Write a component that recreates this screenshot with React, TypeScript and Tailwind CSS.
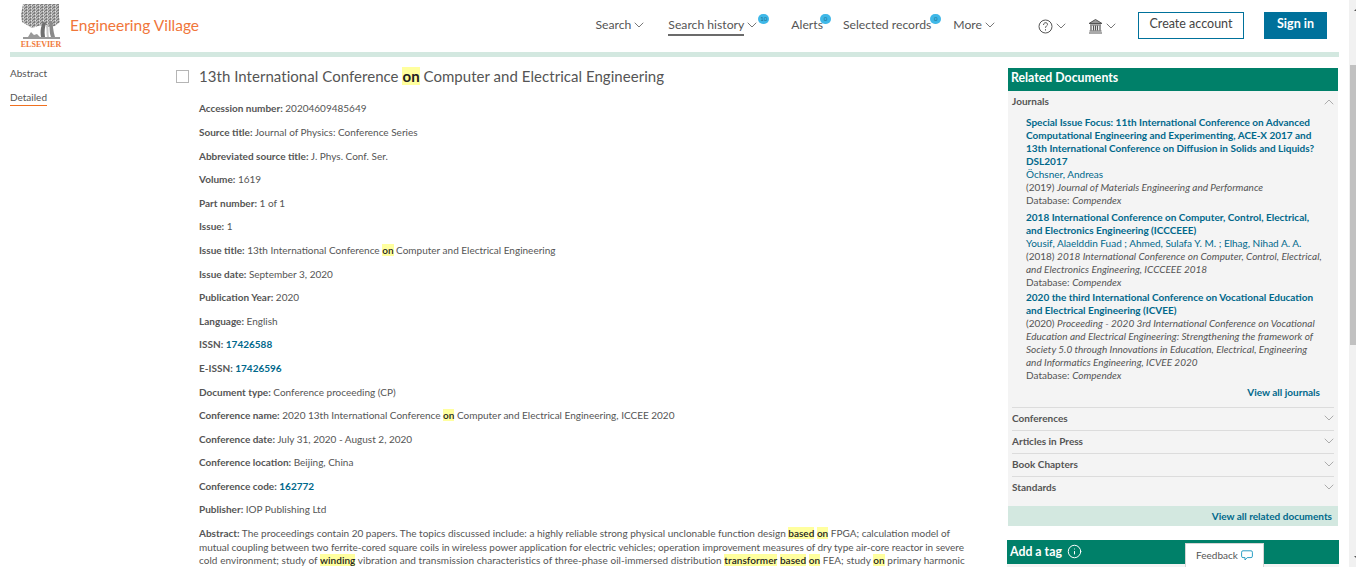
import { ChevronDown, ChevronUp, Info } from 'lucide-react'
import { ReactNode } from 'react'

const Hl = ({ children }: { children: ReactNode }) => (
  <span className="bg-[#ffff9e] font-semibold text-[#222]">{children}</span>
)

const Field = ({ label, children }: { label: string; children: ReactNode }) => (
  <p className="mb-[10px] h-[13.6px] whitespace-nowrap">
    <span className="font-bold">{label}:</span> {children}
  </p>
)

const Link = ({ children }: { children: ReactNode }) => (
  <span className="font-bold text-[#00688b]">{children}</span>
)

function Logo() {
  return (
    <div className="flex w-[40px] flex-col items-center">
      <svg width="40" height="36" viewBox="0 0 40 36">
        <defs>
          <pattern id="leaves" width="4" height="3" patternUnits="userSpaceOnUse">
            <rect width="4" height="3" fill="#b4b4b4" />
            <path d="M0 0h2v1H0zM3 1h1v1H3zM1 2h1v1H1z" fill="#7c7c7c" />
            <path d="M2 1h1v1H2z" fill="#e2e2e2" />
          </pattern>
        </defs>
        <path d="M2 0h36v12l1 6-5 4-6 1-3-2-8 1-6 2-5-3-5-3-1-7z" fill="url(#leaves)" />
        <path d="M22 18c-2 5-3 8-2 15h4c-1-6 0-10 1-14z" fill="#6f6f6f" />
        <path d="M28 17c1 6 0 11 2 16h4c-2-6-2-12-3-16z" fill="#8a8a8a" />
        <path d="M25 22c1 4 0 8 1 11h2c-1-4 0-8-1-11z" fill="#c8c8c8" />
        <path d="M7 33l3-5 3 3 3-1 3 3z" fill="#9a9a9a" />
        <path d="M2 34h37" stroke="#777" strokeWidth="1.5" />
      </svg>
      <span className="text-[8px] leading-[9px] font-bold text-[#f07a3a] [font-family:'Liberation_Serif',serif]">
        ELSEVIER
      </span>
    </div>
  )
}

function NavItem({
  label,
  chevron,
  badge,
  badgeRight = '-right-[10px]',
  active,
}: {
  label: string
  chevron?: boolean
  badge?: string
  badgeRight?: string
  active?: boolean
}) {
  return (
    <div className="relative flex h-[20px] items-center pb-[2px]">
      <span className="relative">
        {label}
        {active && <span className="absolute top-[18px] left-0 h-[2px] w-full bg-[#6b6b6b]" />}
      </span>
      {chevron && <ChevronDown size={16} strokeWidth={1.2} />}
      {badge && (
        <span
          className={`absolute -top-[2px] ${badgeRight} flex h-[10px] w-[11px] items-center justify-center rounded-full bg-[#3fb8e8] text-[6px] leading-none text-[#1b6e8c]`}
        >
          {badge}
        </span>
      )}
    </div>
  )
}

function Header() {
  return (
    <header className="flex h-[52px] items-center pl-[21px] pr-[22px]">
      <Logo />
      <span className="ml-[9px] text-[15.5px] text-[#f0763a]">Engineering Village</span>
      <nav className="ml-auto flex items-center text-[12.2px] text-[#555]">
        <NavItem label="Search" chevron />
        <div className="ml-[21px]">
          <NavItem label="Search history" chevron active badge="10" badgeRight="-right-[9px]" />
        </div>
        <div className="ml-[31px]">
          <NavItem label="Alerts" badge="0" badgeRight="-right-[8px]" />
        </div>
        <div className="ml-[20px]">
          <NavItem label="Selected records" badge="0" />
        </div>
        <div className="ml-[22px]">
          <NavItem label="More" chevron />
        </div>
        <div className="ml-[40px] flex items-center">
          <svg width="15" height="15" viewBox="0 0 15 15" fill="none" stroke="#555" strokeWidth="1">
            <circle cx="7.5" cy="7.5" r="6.5" />
            <path d="M5.5 6c0-3 4-3 4-.6 0 1.5-2 1.5-2 3.4" />
            <path d="M7.5 10.2v1.3" />
          </svg>
          <ChevronDown size={16} strokeWidth={1.2} />
        </div>
        <div className="ml-[19px] flex items-center">
          <svg width="15" height="16" viewBox="0 0 15 16" fill="none" stroke="#555" strokeWidth="1">
            <path d="M1 5.5L7.5 1.5 14 5.5z" fill="#999" />
            <path d="M2 7h11M1.5 13h12M1 15h13" />
            <path d="M3 7.5v5M5.5 7.5v5M7.5 7.5v5M9.5 7.5v5M12 7.5v5" strokeWidth="1.2" />
          </svg>
          <ChevronDown size={16} strokeWidth={1.2} />
        </div>
        <button className="ml-[19px] -mt-[1px] flex h-[27px] w-[106px] items-center justify-center border border-[#00719b] pb-[3px] text-[12.5px] text-[#444]">
          Create account
        </button>
        <button className="ml-[20px] -mt-[1px] flex h-[27px] w-[63px] items-center justify-center bg-[#00719b] pb-[3px] text-[12.5px] font-bold text-white">
          Sign in
        </button>
      </nav>
    </header>
  )
}

function AccordionRow({ label }: { label: string }) {
  return (
    <div className="flex h-[23px] items-center justify-between border-t border-[#dcdcdc] pb-[2px] text-[#555]">
      <span className="font-bold">{label}</span>
      <ChevronDown size={16} strokeWidth={1} className="-mr-[3px] text-[#888]" />
    </div>
  )
}

function Sidebar() {
  return (
    <aside className="relative mt-[11px] flex w-[330px] shrink-0 flex-col text-[10px] leading-[13px]">
      <div className="flex h-[23px] items-center bg-[#008069] pb-[4px] pl-[3px] text-[12.3px] font-bold text-white">
        Related Documents
      </div>
      <div className="h-[415px] bg-[#f4f4f4] text-[#555]">
        <div className="px-[4px]">
          <div className="flex h-[21px] items-center justify-between">
            <span className="font-bold">Journals</span>
            <ChevronUp size={16} strokeWidth={1} className="-mr-[3px] text-[#888]" />
          </div>
          <div className="mt-[4px] pl-[14px]">
            <p className="font-bold text-[#00688b]">
              Special Issue Focus: 11th International Conference on Advanced
              <br />
              Computational Engineering and Experimenting, ACE-X 2017 and
              <br />
              13th International Conference on Diffusion in Solids and Liquids?
              <br />
              DSL2017
            </p>
            <p className="text-[#00688b]">Öchsner, Andreas</p>
            <p>
              (2019) <em>Journal of Materials Engineering and Performance</em>
            </p>
            <p>
              Database: <em>Compendex</em>
            </p>
            <p className="mt-[4px] font-bold text-[#00688b]">
              2018 International Conference on Computer, Control, Electrical,
              <br />
              and Electronics Engineering (ICCCEEE)
            </p>
            <p className="text-[#00688b]">Yousif, Alaelddin Fuad ; Ahmed, Sulafa Y. M. ; Elhag, Nihad A. A.</p>
            <p>
              (2018) <em>2018 International Conference on Computer, Control, Electrical,</em>
              <br />
              <em>and Electronics Engineering, ICCCEEE 2018</em>
            </p>
            <p>
              Database: <em>Compendex</em>
            </p>
            <p className="mt-[2px] font-bold text-[#00688b]">
              2020 the third International Conference on Vocational Education
              <br />
              and Electrical Engineering (ICVEE)
            </p>
            <p>
              (2020) <em>Proceeding - 2020 3rd International Conference on Vocational</em>
              <br />
              <em>Education and Electrical Engineering: Strengthening the framework of</em>
              <br />
              <em>Society 5.0 through Innovations in Education, Electrical, Engineering</em>
              <br />
              <em>and Informatics Engineering, ICVEE 2020</em>
            </p>
            <p>
              Database: <em>Compendex</em>
            </p>
            <p className="mt-[4px] mb-[8px] pr-[14px] text-right font-bold text-[#00688b]">View all journals</p>
          </div>
          <AccordionRow label="Conferences" />
          <AccordionRow label="Articles in Press" />
          <AccordionRow label="Book Chapters" />
          <AccordionRow label="Standards" />
        </div>
      </div>
      <div className="flex h-[20px] items-center justify-end bg-[#d3e8e0] pr-[6px] font-bold text-[#00688b]">
        View all related documents
      </div>
      <div className="mt-[14px] -mx-[1px] flex h-[24px] items-center gap-[5px] bg-[#008069] pb-[2px] pl-[3px] text-[12.3px] font-bold text-white">
        Add a tag
        <Info size={15} strokeWidth={1.6} />
      </div>
      <div className="-mx-[1px] h-[10px] bg-[#f4f4f4]" />
      <div className="absolute top-[475px] left-[177px] flex h-[26px] w-[79px] items-center justify-center gap-[3px] border border-b-0 border-[#d5d5d5] bg-white pb-[2px] text-[10px] text-[#555]">
        Feedback
        <svg width="12" height="11" viewBox="0 0 12 11" fill="none" stroke="#2b9fc4" strokeWidth="1">
          <path d="M2 .8h8a1.4 1.4 0 0 1 1.4 1.4v4a1.4 1.4 0 0 1-1.4 1.4H6.2L4 10V7.6H2A1.4 1.4 0 0 1 .6 6.2v-4A1.4 1.4 0 0 1 2 .8z" />
        </svg>
      </div>
    </aside>
  )
}

function Record() {
  return (
    <main className="ml-[89px] w-[832px] shrink-0 pt-[10px]">
      <div className="flex h-[18px] items-center">
        <span className="size-[13px] border border-[#b5b5b5]" />
        <h1 className="ml-[10px] text-[15px] tracking-[0.04px] whitespace-nowrap text-[#555]">
          13th International Conference <span className="bg-[#ffff9e] font-bold text-[#222]">on</span> Computer and
          Electrical Engineering
        </h1>
      </div>
      <div className="mt-[17.4px] pl-[23px] text-[10px] leading-[13.6px] text-[#555]">
        <Field label="Accession number">20204609485649</Field>
        <Field label="Source title">Journal of Physics: Conference Series</Field>
        <Field label="Abbreviated source title">J. Phys. Conf. Ser.</Field>
        <Field label="Volume">1619</Field>
        <Field label="Part number">1 of 1</Field>
        <Field label="Issue">1</Field>
        <Field label="Issue title">
          13th International Conference <Hl>on</Hl> Computer and Electrical Engineering
        </Field>
        <Field label="Issue date">September 3, 2020</Field>
        <Field label="Publication Year">2020</Field>
        <Field label="Language">English</Field>
        <Field label="ISSN">
          <Link>17426588</Link>
        </Field>
        <Field label="E-ISSN">
          <Link>17426596</Link>
        </Field>
        <Field label="Document type">Conference proceeding (CP)</Field>
        <Field label="Conference name">
          2020 13th International Conference <Hl>on</Hl> Computer and Electrical Engineering, ICCEE 2020
        </Field>
        <Field label="Conference date">July 31, 2020 - August 2, 2020</Field>
        <Field label="Conference location">Beijing, China</Field>
        <Field label="Conference code">
          <Link>162772</Link>
        </Field>
        <Field label="Publisher">IOP Publishing Ltd</Field>
        <p className="whitespace-nowrap">
          <span className="font-bold">Abstract:</span> The proceedings contain 20 papers. The topics discussed
          include: a highly reliable strong physical unclonable function design <Hl>based</Hl> <Hl>on</Hl> FPGA;
          calculation model of
          <br />
          <span className="tracking-[-0.04px]">
            mutual coupling between two ferrite-cored square coils in wireless power application for electric vehicles;
            operation improvement measures of dry type air-core reactor in severe
          </span>
          <br />
          <span className="tracking-[0.05px]">
            cold environment; study of <Hl>winding</Hl> vibration and transmission characteristics of three-phase
            oil-immersed distribution <Hl>transformer</Hl> <Hl>based</Hl> <Hl>on</Hl> FEA; study <Hl>on</Hl> primary
            harmonic
          </span>
        </p>
      </div>
    </main>
  )
}

export default function App() {
  return (
    <div className="relative h-[567px] w-[1356px] overflow-hidden bg-white [font-family:Lato,sans-serif]">
      <div className="w-[1349px]">
        <Header />
        <div className="mx-[10px] h-[5px] bg-[#d3e8e0]" />
        <div className="flex pl-[10px]">
          <div className="w-[77px] shrink-0 pt-[10px] text-[10px] leading-[13px] text-[#555]">
            <p>Abstract</p>
            <p className="mt-[11px] w-fit border-b border-[#f0701f] pb-[1px]">Detailed</p>
          </div>
          <Record />
          <Sidebar />
        </div>
      </div>
      <div className="absolute top-0 right-0 h-full w-[7px] bg-[#f1f1f1]">
        <div className="mt-[65px] ml-[1px] h-[280px] bg-[#c1c1c1]" />
        <span className="absolute top-[8px] left-[5px] h-0 w-0 border-x-[3px] border-b-[3px] border-x-transparent border-b-[#555]" />
        <span className="absolute top-[556px] left-[5px] h-0 w-0 border-x-[3px] border-t-[3px] border-x-transparent border-t-[#555]" />
      </div>
    </div>
  )
}
